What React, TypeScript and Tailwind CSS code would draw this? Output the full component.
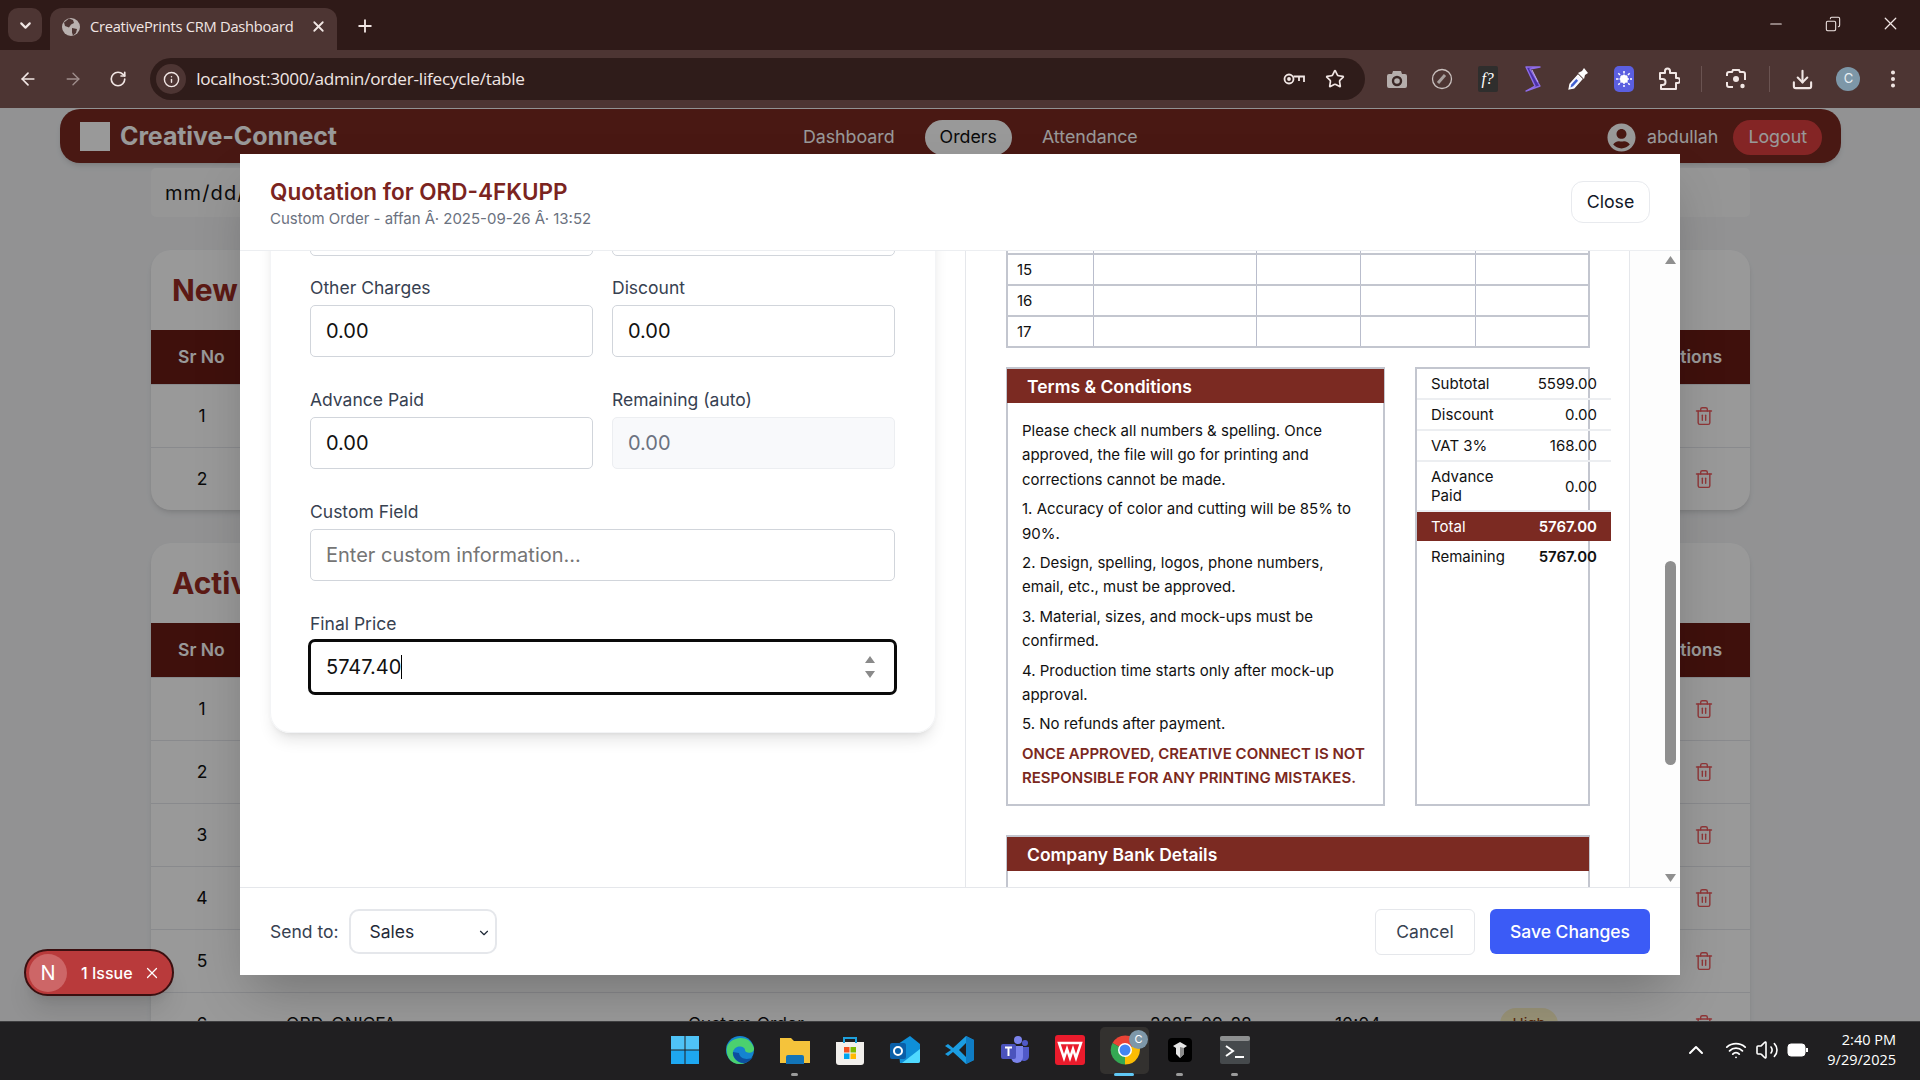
import React from "react";
import {
  ArrowLeft,
  ArrowRight,
  ChevronDown,
  ChevronUp,
  Copy,
  Download,
  Info,
  Minus,
  MoreVertical,
  Plus,
  RotateCw,
  Star,
  Trash2,
  Volume2,
  Wifi,
  X,
} from "lucide-react";
import { FaUserCircle } from "react-icons/fa";

const Field = ({ label, value, muted }: { label: string; value: string; muted?: boolean }) => (
  <div>
    <div className="text-[17.5px] leading-[24px] text-[#374151]">{label}</div>
    <div
      className={
        muted
          ? "mt-[5px] h-[52px] flex items-center px-[15px] text-[20px] rounded-[5px] border border-[#eceef1] bg-[#f8f9fb] text-[#6b7280]"
          : "mt-[5px] h-[52px] flex items-center px-[15px] text-[20px] rounded-[5px] border border-[#d1d5db] bg-white text-[#111]"
      }
    >
      {value}
    </div>
  </div>
);

const ToolbarSlot = ({ children }: { children: React.ReactNode }) => (
  <div className="w-[45.4px] shrink-0 flex items-center justify-center">{children}</div>
);

const Separator = () => <div className="w-[1px] h-[26px] bg-[#6a5351] mx-[-0.5px] shrink-0" />;

const BrowserTabs = () => (
  <div className="h-[50px] shrink-0 bg-[#2f1a18] flex items-end text-[#f1e6e4]">
    <div className="w-[34px] h-[34px] ml-[8px] mb-[8px] rounded-[10px] bg-[#4d3533] flex items-center justify-center">
      <ChevronDown size={17} strokeWidth={3} />
    </div>
    <div className="w-[287px] h-[42px] ml-[8px] rounded-t-[12px] bg-[#4d3533] flex items-center pl-[11px] pb-[5px]">
      <svg width="20" height="20" viewBox="0 0 20 20" className="shrink-0">
        <circle cx="10" cy="10" r="9" fill="#b9b1af" />
        <path d="M8 1.5 12 3l1 3-3 1.5-2 3L4 9 3 5.5ZM11 11l5 1-1 4-3 2.5-1-3Z" fill="#4d3533" />
      </svg>
      <span className="ml-[9px] text-[14.7px] font-['Open_Sans',sans-serif] whitespace-nowrap tracking-[-0.27px]">CreativePrints CRM Dashboard</span>
      <X size={17} strokeWidth={2.5} className="ml-auto mr-[10px]" />
    </div>
    <Plus size={20} strokeWidth={2.2} className="ml-[18px] mb-[14px]" />
    <div className="ml-auto flex items-center mb-[16px] mr-[19px]">
      <Minus size={18} strokeWidth={1.5} className="mr-[40px]" />
      <Copy size={16} strokeWidth={1.6} className="mr-[39px] -scale-x-100" />
      <X size={21} strokeWidth={1.4} />
    </div>
  </div>
);

const BrowserToolbar = () => (
  <div className="h-[58px] shrink-0 bg-[#4d3533] flex items-center pl-[5px] text-[#f1e6e4]">
    <ToolbarSlot><ArrowLeft size={20} strokeWidth={2} /></ToolbarSlot>
    <ToolbarSlot><ArrowRight size={20} strokeWidth={1.6} className="text-[#a08f8d]" /></ToolbarSlot>
    <ToolbarSlot><RotateCw size={18} strokeWidth={2.2} /></ToolbarSlot>
    <div className="w-[1215px] h-[42px] ml-[9px] rounded-full bg-[#2f1c1a] flex items-center pl-[6px] pr-[8px]">
      <div className="w-[30px] h-[30px] rounded-full bg-[#4d3533] flex items-center justify-center">
        <Info size={17} strokeWidth={2} />
      </div>
      <span className="ml-[10px] text-[17.2px] font-['Open_Sans',sans-serif] tracking-[-0.25px]">localhost:3000/admin/order-lifecycle/table</span>
      <svg width="22" height="14" viewBox="0 0 22 14" fill="none" stroke="#f1e6e4" strokeWidth="1.8" className="ml-auto mr-[20px]">
        <circle cx="6" cy="7" r="4.5" />
        <circle cx="6" cy="7" r="1" fill="#f1e6e4" />
        <path d="M10.5 4.5H21v5.5M16 5v4" />
      </svg>
      <Star size={20} strokeWidth={2} className="mr-[12px]" />
    </div>
    <div className="w-[9px] shrink-0" />
    <ToolbarSlot>
      <svg width="20" height="22" viewBox="0 0 20 22">
        <path d="M6 3h8l1 3h3a2 2 0 0 1 2 2v10a2 2 0 0 1-2 2H2a2 2 0 0 1-2-2V8a2 2 0 0 1 2-2h3Z" fill="#b5aeac" />
        <circle cx="10" cy="13" r="4" fill="none" stroke="#3a2725" strokeWidth="2.4" />
      </svg>
    </ToolbarSlot>
    <ToolbarSlot>
      <svg width="22" height="22" viewBox="0 0 22 22" fill="none">
        <circle cx="11" cy="11" r="9.5" stroke="#c9c0be" strokeWidth="1.3" />
        <path d="m7 15 7-8" stroke="#a8a09e" strokeWidth="3" />
      </svg>
    </ToolbarSlot>
    <ToolbarSlot>
      <div className="w-[20px] h-[26px] bg-[#2f2e2d] rounded-[2px] flex items-center justify-center font-['Liberation_Serif',serif] italic text-[16px] text-white">f?</div>
    </ToolbarSlot>
    <ToolbarSlot>
      <svg width="18" height="26" viewBox="0 0 18 26" fill="none" strokeLinejoin="round">
        <path d="M2 1h14L6 3l10 17-14 5 9-5Z" fill="#4b32a8" stroke="#8e6ce8" strokeWidth="1.4" />
        <path d="M8 4l6 12" stroke="#c3aef5" strokeWidth="1" />
      </svg>
    </ToolbarSlot>
    <ToolbarSlot>
      <svg width="24" height="24" viewBox="0 0 24 24" fill="none">
        <path d="m3 22 1-5 8-9 4 4-8 9Z" fill="#f4f4ff" stroke="#fff" strokeWidth="1.2" />
        <path d="m4.5 20.5.8-3 5-5.5 1.8 1.8-5 5.5Z" fill="#3f5fd0" />
        <path d="m12 6 6 6 1-4 3-2-4-5-2 3Z" fill="#fff" />
      </svg>
    </ToolbarSlot>
    <ToolbarSlot>
      <div className="w-[20px] h-[26px] rounded-[5px] bg-[#5b5fe0] flex items-center justify-center">
        <svg width="16" height="16" viewBox="0 0 16 16" stroke="#fff" strokeWidth="1.5" fill="none">
          <circle cx="8" cy="8" r="3.2" fill="#fff" />
          <path d="M8 0v16M0 8h16M2.3 2.3l11.4 11.4M13.7 2.3 2.3 13.7" strokeDasharray="2.5 1" />
        </svg>
      </div>
    </ToolbarSlot>
    <ToolbarSlot>
      <svg width="22" height="24" viewBox="0 0 22 24" fill="none" stroke="#f1e6e4" strokeWidth="2" strokeLinejoin="round">
        <path d="M2 6h5V4a2.5 2.5 0 0 1 5 0v2h6v5h1.5a2.5 2.5 0 0 1 0 5H18v6H3v-4h1.5a2.5 2.5 0 0 0 0-6H2Z" />
      </svg>
    </ToolbarSlot>
    <div className="w-[10px] shrink-0" />
    <Separator />
    <div className="w-[11px] shrink-0" />
    <ToolbarSlot>
      <svg width="22" height="24" viewBox="0 0 22 24" fill="none" stroke="#f1e6e4" strokeWidth="2">
        <path d="M2 9V7a2 2 0 0 1 2-2h3l1-2h6l1 2h3a2 2 0 0 1 2 2v2M2 15v3a2 2 0 0 0 2 2h4M20 13V9" />
        <circle cx="11" cy="12" r="3" fill="#f1e6e4" stroke="none" />
        <circle cx="17.5" cy="19" r="2.2" fill="#f1e6e4" stroke="none" />
      </svg>
    </ToolbarSlot>
    <div className="w-[11px] shrink-0" />
    <Separator />
    <div className="w-[11px] shrink-0" />
    <ToolbarSlot><Download size={23} strokeWidth={2.2} /></ToolbarSlot>
    <ToolbarSlot>
      <div className="w-[24px] h-[24px] rounded-full bg-[#7d97a8] flex items-center justify-center text-[13px] text-[#e8eef2]">C</div>
    </ToolbarSlot>
    <ToolbarSlot><MoreVertical size={22} strokeWidth={2.4} className="-ml-[2px]" /></ToolbarSlot>
  </div>
);

const OrdersRow = ({ sr, last }: { sr: number; last?: boolean }) => (
  <div className="grid grid-cols-[102px_435px_462px_185px_165px_157px_93px] items-center h-[63px] border-t border-[#e5e7eb] text-[17.5px] text-[#111]">
    <div className="text-center">{sr}</div>
    {last ? (
      <>
        <div className="pl-[33px]">ORD-ONICFA</div>
        <div>Custom Order</div>
        <div>2025-09-28</div>
        <div>10:04</div>
        <div className="w-[58px] h-[32px] rounded-full bg-[#fef3c7] text-[#92400e] text-[15px] flex items-center justify-center">High</div>
      </>
    ) : (
      <div className="col-span-5" />
    )}
    <div className="flex justify-end pr-[36px]">
      <Trash2 size={20} strokeWidth={1.7} className="text-[#ef5a5d]" />
    </div>
  </div>
);

const OrdersCard = ({ title, rows, className }: { title: string; rows: number; className?: string }) => (
  <div className={"bg-white rounded-[20px] overflow-hidden shadow-md " + (className ?? "")}>
    <div className="h-[80px] flex items-center pl-[21px] text-[30px] font-bold text-[#9a2c24]">{title}</div>
    <div className="h-[54px] bg-[#6a1b14] flex items-center justify-between pl-[27px] pr-[28px] text-[17.5px] font-semibold text-white">
      <span>Sr No</span>
      <span>Actions</span>
    </div>
    {Array.from({ length: rows }).map((_, i) => (
      <OrdersRow key={i} sr={i + 1} last={rows > 2 && i === 5} />
    ))}
  </div>
);

const DashboardPage = () => (
  <>
    <div className="ml-[60px] w-[1781px] mt-[1px] h-[54px] rounded-[20px] bg-[#7b2820] shadow-md flex items-center pl-[20px] pr-[19px] pt-[2px] text-white">
      <div className="w-[30px] h-[29px] bg-white -mt-[2px]" />
      <span className="ml-[10px] text-[25px] font-bold tracking-[-0.1px]">Creative-Connect</span>
      <div className="ml-[466px] flex-1 flex items-center text-[17.8px]">
        <span>Dashboard</span>
        <span className="ml-[30px] h-[35px] px-[15px] rounded-full bg-white text-[#111] flex items-center">Orders</span>
        <span className="ml-[30px]">Attendance</span>
      </div>
      <FaUserCircle size={29} className="text-white" />
      <span className="ml-[11px] text-[17.8px]">abdullah</span>
      <span className="ml-[15px] h-[35px] px-[15px] rounded-full bg-[#dc3f3f] flex items-center text-[17.8px]">Logout</span>
    </div>
    <div className="mx-[151px] w-[1599px]">
      <div className="mt-[5px] h-[49px] rounded-[5px] bg-[#fafafa] flex items-center pl-[14px] text-[20px] tracking-[1.1px] text-[#111]">mm/dd/yyyy</div>
      <OrdersCard title="New Orders" rows={2} className="mt-[33px]" />
      <OrdersCard title="Active Orders" rows={6} className="mt-[33px]" />
    </div>
  </>
);

const SummaryRow = ({ label, value }: { label: string; value: string }) => (
  <div className="flex items-center justify-between px-[14px] py-[5px] border-b-2 border-[#eceef1]">
    <span className="w-[90px]">{label}</span>
    <span>{value}</span>
  </div>
);

const Quotation = () => (
  <div className="w-[584px] ml-[40px] text-[15px] leading-[19px] text-[#111]">
    <div className="border-2 border-t-0 border-[#c3c6cf]">
      {["", "15", "16", "17"].map((n, i) => (
        <div
          key={i}
          className={
            i === 0
              ? "grid grid-cols-[86px_163px_104px_115px_1fr] h-[2px]"
              : "grid grid-cols-[86px_163px_104px_115px_1fr] h-[31px] border-t-2 border-[#c3c6cf]"
          }
        >
          <div className="pl-[9px] flex items-center border-r border-[#b9bdcc]">{n}</div>
          <div className="border-r border-[#b9bdcc]" />
          <div className="border-r border-[#b9bdcc]" />
          <div className="border-r border-[#b9bdcc]" />
          <div />
        </div>
      ))}
    </div>
    <div className="mt-[19px] flex items-stretch h-[439px]">
      <div className="w-[379px] border-2 border-[#c3c6cf]">
        <div className="h-[34px] -mx-[1px] bg-[#7b2a22] text-white text-[17.5px] font-semibold flex items-center pl-[20px]">Terms &amp; Conditions</div>
        <div className="px-[14px] pt-[16px] text-[15px] leading-[24.4px] flex flex-col gap-[5px]">
          <p>Please check all numbers &amp; spelling. Once approved, the file will go for printing and corrections cannot be made.</p>
          <p>1. Accuracy of color and cutting will be 85% to 90%.</p>
          <p>2. Design, spelling, logos, phone numbers, email, etc., must be approved.</p>
          <p>3. Material, sizes, and mock-ups must be confirmed.</p>
          <p>4. Production time starts only after mock-up approval.</p>
          <p>5. No refunds after payment.</p>
          <p className="font-semibold text-[#7b2820]">ONCE APPROVED, CREATIVE CONNECT IS NOT RESPONSIBLE FOR ANY PRINTING MISTAKES.</p>
        </div>
      </div>
      <div className="ml-[30px] w-[175px] border-2 border-[#c3c6cf]">
        <div className="w-[194px]">
          <SummaryRow label="Subtotal" value="5599.00" />
          <SummaryRow label="Discount" value="0.00" />
          <SummaryRow label="VAT 3%" value="168.00" />
          <SummaryRow label="Advance Paid" value="0.00" />
          <div className="h-[29px] bg-[#7b2a22] text-white flex items-center justify-between px-[14px] font-semibold">
            <span className="font-normal">Total</span>
            <span>5767.00</span>
          </div>
          <div className="h-[31px] flex items-center justify-between px-[14px]">
            <span>Remaining</span>
            <span className="font-semibold">5767.00</span>
          </div>
        </div>
      </div>
    </div>
    <div className="mt-[29px] border-2 border-[#c3c6cf] h-[60px]">
      <div className="h-[34px] -mx-[1px] bg-[#7b2a22] text-white text-[17.5px] font-semibold flex items-center pl-[20px]">Company Bank Details</div>
    </div>
  </div>
);

const QuotationModal = () => (
  <div className="w-[1440px] h-[821px] bg-white shadow-2xl flex flex-col font-['Inter',sans-serif]">
    <div className="h-[97px] shrink-0 border-b border-[#eceef1] flex items-center justify-between pl-[30px] pr-[30px]">
      <div className="pt-[3px]">
        <div className="text-[22.5px] leading-[30px] font-semibold text-[#7b2420]">Quotation for ORD-4FKUPP</div>
        <div className="mt-[1px] text-[15px] leading-[22px] text-[#6b7280]">Custom Order - affan Â· 2025-09-26 Â· 13:52</div>
      </div>
      <div className="w-[79px] h-[42px] rounded-[12px] border border-[#e8eaee] flex items-center justify-center text-[17.8px] text-[#111827]">Close</div>
    </div>
    <div className="flex-1 flex min-h-0">
      <div className="w-[726px] shrink-0 overflow-hidden border-r border-[#e5e7eb]">
        <div className="ml-[30px] mr-[29px] -mt-[60px] h-[542px] rounded-[20px] border border-[#f3f4f6] shadow-lg pl-[39px] pr-[40px] pt-[15px]">
          <div className="grid grid-cols-2 gap-x-[19px] h-[49px]">
            <div className="rounded-[5px] border border-[#d1d5db]" />
            <div className="rounded-[5px] border border-[#d1d5db]" />
          </div>
          <div className="mt-[20px] grid grid-cols-2 gap-x-[19px] gap-y-[31px]">
            <Field label="Other Charges" value="0.00" />
            <Field label="Discount" value="0.00" />
            <Field label="Advance Paid" value="0.00" />
            <Field label="Remaining (auto)" value="0.00" muted />
          </div>
          <div className="mt-[31px]">
            <div className="text-[17.5px] leading-[24px] text-[#374151]">Custom Field</div>
            <div className="mt-[5px] h-[52px] flex items-center px-[15px] text-[20px] rounded-[5px] border border-[#d1d5db] text-[#757575]">Enter custom information...</div>
          </div>
          <div className="mt-[31px]">
            <div className="text-[17.5px] leading-[24px] text-[#374151]">Final Price</div>
            <div className="mt-[3px] -mx-[2px] h-[56px] flex items-center pl-[15px] pr-[18px] text-[20px] rounded-[7px] border-[3px] border-[#0a0a0a] text-[#111]">
              <span>5747.40</span>
              <span className="w-[1px] h-[24px] bg-black" />
              <svg width="12" height="26" viewBox="0 0 12 26" className="ml-auto" fill="#8a8a8a">
                <path d="M6 2 11 9H1ZM6 24 1 17H11Z" />
              </svg>
            </div>
          </div>
        </div>
      </div>
      <div className="w-[664px] shrink-0 overflow-hidden border-r border-[#e5e7eb]">
        <Quotation />
      </div>
      <div className="flex-1 bg-[#fdfdfd] flex flex-col items-end pr-[3px] pt-[4px] pb-[4px]">
        <div className="w-[13px] flex flex-col items-center h-full">
          <svg width="13" height="10" viewBox="0 0 13 10" fill="#8f8f8f"><path d="M6.5 1 12 9H1Z" /></svg>
          <div className="mt-[296px] w-[11px] h-[204px] rounded-full bg-[#8f8f8f]" />
          <svg width="13" height="10" viewBox="0 0 13 10" fill="#8f8f8f" className="mt-auto"><path d="M6.5 9 1 1H12Z" /></svg>
        </div>
      </div>
    </div>
    <div className="h-[88px] shrink-0 border-t border-[#e5e7eb] flex items-center pl-[30px] pr-[30px] text-[17.5px]">
      <span className="text-[#374151] pt-[2px]">Send to:</span>
      <div className="ml-[10px] w-[148px] h-[45px] rounded-[10px] border-2 border-[#e5e7eb] flex items-center pl-[19px] pr-[4px] pt-[2px] text-[#1f2937]">
        Sales
        <ChevronDown size={14} strokeWidth={2} className="ml-auto" />
      </div>
      <div className="ml-auto w-[100px] h-[46px] rounded-[6px] border border-[#e5e7eb] flex items-center justify-center pt-[2px] text-[#374151]">Cancel</div>
      <div className="ml-[15px] w-[160px] h-[45px] rounded-[6px] bg-[#3b5bf6] flex items-center justify-center pt-[2px] font-medium text-white">Save Changes</div>
    </div>
  </div>
);

const NextIssue = () => (
  <div className="absolute left-[24px] bottom-[25px] w-[150px] h-[47px] rounded-full bg-[#b93a3b] border-2 border-[#3b0f10] flex items-center pl-[3px] text-white z-10 shadow-xl font-['Inter',sans-serif]">
    <div className="w-[38px] h-[38px] rounded-full bg-[#cd6667] flex items-center justify-center text-[20px]">N</div>
    <span className="ml-[14px] pt-[1px] text-[16px] font-medium">1 Issue</span>
    <X size={18} strokeWidth={1.6} className="ml-[10px]" />
  </div>
);

const TaskIcon = ({ children, dot }: { children: React.ReactNode; dot?: boolean }) => (
  <div className="relative w-[55px] h-[50px] flex items-center justify-center">
    {children}
    {dot && <div className="absolute left-[24px] bottom-[-1px] w-[7px] h-[3px] rounded-full bg-[#9b9b9b]" />}
  </div>
);

const Taskbar = () => (
  <div className="h-[59px] shrink-0 bg-[#201f21] border-t border-[#3e3e40] flex items-center pb-[2px] text-white">
    <div className="w-[657px] shrink-0" />
    <div className="flex items-center shrink-0">
      <TaskIcon>
        <svg width="30" height="30" viewBox="0 0 30 30">
          <path d="M1 1h13.5v13.5H1ZM15.5 1H29v13.5H15.5Z" fill="#4fc3f7" />
          <path d="M1 15.5h13.5V29H1ZM15.5 15.5H29V29H15.5Z" fill="#1ea7f0" />
        </svg>
      </TaskIcon>
      <TaskIcon>
        <svg width="30" height="30" viewBox="0 0 30 30">
          <circle cx="15" cy="15" r="14" fill="#1484d0" />
          <path d="M2 12C5 2 24 -2 29 13c1 6-9 6-9 2 0-4-10-6-12 2-1 5 5 12 12 11C9 32 0 24 2 12Z" fill="#4bd16f" />
          <path d="M8 17c-1 5 5 12 12 11 3-1 6-3 8-6-4 3-13 3-14-4Z" fill="#0d4f9e" />
        </svg>
      </TaskIcon>
      <TaskIcon dot>
        <svg width="30" height="30" viewBox="0 0 30 30">
          <path d="M0 3h11l3 3h16v22H0Z" fill="#f5c33b" />
          <path d="M8 20h14a2 2 0 0 1 2 2v7H6v-7a2 2 0 0 1 2-2Z" fill="#1274b8" />
        </svg>
      </TaskIcon>
      <TaskIcon>
        <svg width="30" height="30" viewBox="0 0 30 30">
          <path d="M1 7h28v20a3 3 0 0 1-3 3H4a3 3 0 0 1-3-3Z" fill="#f2efec" />
          <path d="M9 8V3h12v5" fill="none" stroke="#1ea0dc" strokeWidth="2" />
          <path d="M9 12h5.5v5.5H9Z" fill="#f25022" />
          <path d="M15.5 12H21v5.5h-5.5Z" fill="#7fba00" />
          <path d="M9 18.5h5.5V24H9Z" fill="#00a4ef" />
          <path d="M15.5 18.5H21V24h-5.5Z" fill="#ffb900" />
        </svg>
      </TaskIcon>
      <TaskIcon>
        <svg width="30" height="30" viewBox="0 0 30 30">
          <path d="M8 9 20 1l10 8v17a2 2 0 0 1-2 2H10Z" fill="#0f8fd8" />
          <path d="M12 28 30 14v12a2 2 0 0 1-2 2Z" fill="#50d9ff" />
          <rect x="0" y="8" width="16" height="16" rx="2" fill="#0a5fa8" />
          <circle cx="8" cy="16" r="4" fill="none" stroke="#fff" strokeWidth="2" />
        </svg>
      </TaskIcon>
      <TaskIcon>
        <svg width="30" height="30" viewBox="0 0 30 30">
          <path d="M21 1 29 5v20l-8 4L8 17l-5 4-3-2 6-4-6-4 3-2 5 4Z" fill="#1b9de2" />
          <path d="M21 8v14l-7-7Z" fill="#201f21" />
          <path d="M21 1 29 5v20l-8 4Z" fill="#0f7cc4" />
        </svg>
      </TaskIcon>
      <TaskIcon>
        <svg width="30" height="30" viewBox="0 0 30 30">
          <circle cx="18" cy="5" r="4" fill="#7b83eb" />
          <circle cx="25" cy="8" r="3" fill="#5059c9" />
          <path d="M20 12h9v9a5 5 0 0 1-9 3Z" fill="#5059c9" />
          <path d="M11 11h12v11a6 6 0 0 1-12 0Z" fill="#7b83eb" />
          <rect x="1" y="9" width="15" height="15" rx="2" fill="#4b53bc" />
          <path d="M5 12.5h7M8.5 12.5V21" stroke="#fff" strokeWidth="2" />
        </svg>
      </TaskIcon>
      <TaskIcon>
        <svg width="30" height="30" viewBox="0 0 30 30">
          <rect width="30" height="30" rx="3" fill="#ea1b2c" />
          <path d="M4 8h22l-5 15-3-9-3 9-3-9-3 9Z" fill="none" stroke="#fff" strokeWidth="2.5" />
        </svg>
      </TaskIcon>
      <div className="relative w-[55px] h-[50px] flex items-center justify-center">
        <div className="absolute left-[3px] top-[2px] w-[49px] h-[47px] rounded-[5px] bg-[#33312f]" />
        <svg width="30" height="30" viewBox="0 0 30 30" className="relative">
          <path d="M15 15 2.5 8A14.5 14.5 0 0 1 28 8Z" fill="#ea4335" />
          <path d="M15 15 28 8a14.5 14.5 0 0 1-13 21.5Z" fill="#fbbc04" />
          <path d="M15 15v14.5A14.5 14.5 0 0 1 2.5 8Z" fill="#34a853" />
          <circle cx="15" cy="15" r="7" fill="#fff" />
          <circle cx="15" cy="15" r="5.5" fill="#4285f4" />
        </svg>
        <div className="absolute right-[4px] top-[5px] w-[19px] h-[19px] rounded-full bg-[#7d97a8] text-[11px] flex items-center justify-center">C</div>
        <div className="absolute left-[17px] bottom-[-1px] w-[20px] h-[3px] rounded-full bg-[#60c8f5]" />
      </div>
      <TaskIcon dot>
        <svg width="24" height="24" viewBox="0 0 24 24">
          <rect width="24" height="24" rx="4" fill="#000" />
          <path d="m12 4 7 4-3 2v6l-4 4-4-4v-6L5 8Z" fill="#e5e5e5" />
          <path d="M12 9v11l4-4v-6Z" fill="#8a8a8a" />
        </svg>
      </TaskIcon>
      <TaskIcon dot>
        <svg width="30" height="28" viewBox="0 0 30 28">
          <rect width="30" height="28" rx="2" fill="#45494c" />
          <rect width="30" height="5" rx="2" fill="#8d8f90" />
          <path d="m6 10 7 5-7 5" fill="none" stroke="#fff" strokeWidth="2" />
          <path d="M15 21h9" stroke="#fff" strokeWidth="2" />
        </svg>
      </TaskIcon>
    </div>
    <div className="flex-1 flex items-center justify-end pr-[24px]">
      <ChevronUp size={24} strokeWidth={2} />
      <Wifi size={22} strokeWidth={2} className="ml-[17px]" />
      <Volume2 size={24} strokeWidth={1.6} className="ml-[8px]" />
      <svg width="22" height="14" viewBox="0 0 22 14" fill="none" className="ml-[8px]">
        <rect x="1" y="1" width="17" height="12" rx="3" fill="#fff" stroke="#fff" strokeWidth="1" />
        <path d="M20 5v4" stroke="#fff" strokeWidth="2" />
      </svg>
      <div className="ml-[18px] text-right text-[14.5px] leading-[20px] font-['Open_Sans',sans-serif]">
        <div>2:40 PM</div>
        <div>9/29/2025</div>
      </div>
    </div>
  </div>
);

export default function App() {
  return (
    <div className="w-[1920px] h-[1080px] overflow-hidden flex flex-col font-['Inter',sans-serif]">
      <BrowserTabs />
      <BrowserToolbar />
      <div className="relative flex-1 overflow-hidden bg-[#f3f4f6]">
        <DashboardPage />
        <div className="absolute inset-0 bg-black/40 flex items-center justify-center">
          <QuotationModal />
        </div>
        <NextIssue />
      </div>
      <Taskbar />
    </div>
  );
}
